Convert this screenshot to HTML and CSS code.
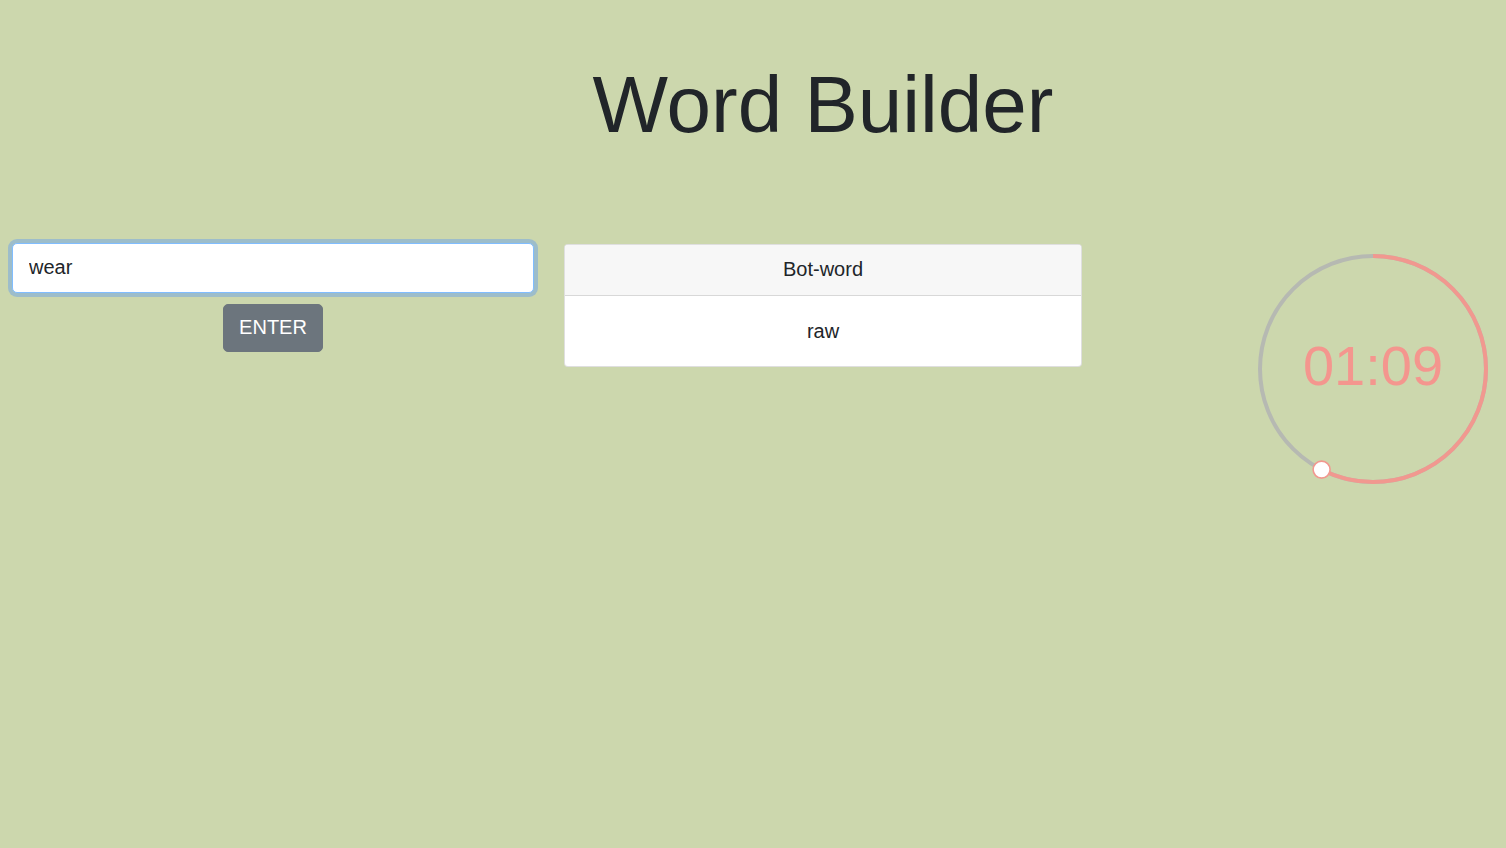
FILE: index.html
```html
<!DOCTYPE html>
<html lang="en">
<head>
<meta charset="utf-8">
<title>Word Builder</title>
<link rel="stylesheet" href="styles.css">
</head>
<body>
  <header class="title-row">
    <h1 class="title">Word Builder</h1>
  </header>
  <main class="game-row">
    <section class="entry">
      <input class="word-input" type="text" value="wear">
      <button class="enter-btn" type="button">ENTER</button>
    </section>
    <section class="card">
      <div class="card-header">Bot-word</div>
      <div class="card-body">raw</div>
    </section>
    <section class="timer">
      <svg class="timer-svg" width="240" height="240" viewBox="0 0 240 240">
        <circle cx="120" cy="120" r="113" fill="none" stroke="#b6b9b2" stroke-width="4"/>
        <circle cx="120" cy="120" r="113" fill="none" stroke="#f1988f" stroke-width="4"
                stroke-dasharray="408.3 710" transform="rotate(-90 120 120)"/>
        <circle cx="68.6" cy="220.6" r="8.5" fill="#ffffff" stroke="#f1988f" stroke-width="1.6"/>
      </svg>
      <div class="timer-text">01:09</div>
    </section>
  </main>
</body>
</html>
```
FILE: styles.css
```css
html, body {
  margin: 0;
  padding: 0;
}
body {
  background: #ccd7ad;
  font-family: "Liberation Sans", Arial, Helvetica, sans-serif;
  font-size: 20px;
  color: #212529;
  height: 848px;
  overflow: hidden;
}
.title-row {
  display: grid;
  grid-template-columns: 530px 518px 1fr;
  column-gap: 26px;
  padding-left: 8px;
  padding-top: 57px;
}
.title {
  grid-column: 2;
  margin: 0;
  font-size: 80px;
  font-weight: 400;
  line-height: 96px;
  text-align: center;
  white-space: nowrap;
}
.game-row {
  display: grid;
  grid-template-columns: 530px 518px 1fr;
  column-gap: 26px;
  padding-left: 8px;
  margin-top: 86px;
  align-items: start;
}
.entry {
  display: flex;
  flex-direction: column;
  align-items: center;
}
.word-input {
  box-sizing: border-box;
  width: 522px;
  height: 50px;
  margin: 4px;
  padding: 0 16px 2px;
  border: 1px solid #80bdff;
  border-radius: 5px;
  background: #ffffff;
  box-shadow: 0 0 0 4px #9dbdca;
  font-family: inherit;
  font-size: 20px;
  color: #212529;
  outline: none;
}
.enter-btn {
  box-sizing: border-box;
  margin-top: 7px;
  width: 100px;
  height: 48px;
  padding: 0 0 2px;
  border: 1px solid #6c757d;
  border-radius: 5px;
  background: #6c757d;
  color: #ffffff;
  font-family: inherit;
  font-size: 20px;
  line-height: 30px;
}
.card {
  margin-top: 5px;
  background: #ffffff;
  border: 1px solid rgba(0, 0, 0, 0.125);
  border-radius: 4px;
  overflow: hidden;
  text-align: center;
}
.card-header {
  background: #f7f7f7;
  border-bottom: 1px solid rgba(0, 0, 0, 0.125);
  padding: 9px 20px 11px;
  line-height: 30px;
}
.card-body {
  padding: 20px;
  line-height: 30px;
}
.timer {
  position: relative;
  justify-self: end;
  width: 240px;
  height: 240px;
  margin-top: 10px;
  margin-right: 13px;
}
.timer-svg {
  display: block;
}
.timer-text {
  position: absolute;
  left: 0;
  right: 0;
  top: 0;
  bottom: 8px;
  display: flex;
  align-items: center;
  justify-content: center;
  font-size: 56px;
  color: #f4968e;
}
```
